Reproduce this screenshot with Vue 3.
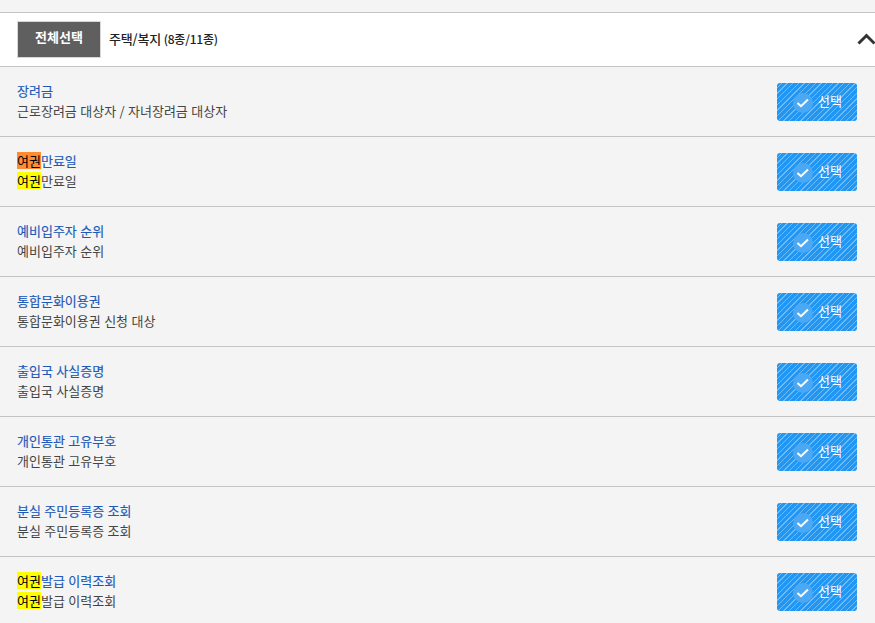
<script setup>
const items = [
  { title: [{ t: '장려금' }], desc: [{ t: '근로장려금 대상자 / 자녀장려금 대상자' }] },
  { title: [{ t: '여권', mark: 'orange' }, { t: '만료일' }], desc: [{ t: '여권', mark: 'yellow' }, { t: '만료일' }] },
  { title: [{ t: '예비입주자 순위' }], desc: [{ t: '예비입주자 순위' }] },
  { title: [{ t: '통합문화이용권' }], desc: [{ t: '통합문화이용권 신청 대상' }] },
  { title: [{ t: '출입국 사실증명' }], desc: [{ t: '출입국 사실증명' }] },
  { title: [{ t: '개인통관 고유부호' }], desc: [{ t: '개인통관 고유부호' }] },
  { title: [{ t: '분실 주민등록증 조회' }], desc: [{ t: '분실 주민등록증 조회' }] },
  { title: [{ t: '여권', mark: 'yellow' }, { t: '발급 이력조회' }], desc: [{ t: '여권', mark: 'yellow' }, { t: '발급 이력조회' }] },
]
</script>

<template>
  <div class="page">
    <div class="head">
      <button class="all">전체선택</button>
      <span class="cat">주택/복지 <em>(8종/11종)</em></span>
      <svg class="chev" width="20" height="12" viewBox="0 0 20 12">
        <path d="M1.5 10.5 L9.5 2.5 L17.5 10.5" fill="none" stroke="#333" stroke-width="3" />
      </svg>
    </div>
    <ul class="list">
      <li v-for="(it, i) in items" :key="i" class="row">
        <div class="info">
          <div class="title">
            <span v-for="(p, j) in it.title" :key="j" :class="p.mark">{{ p.t }}</span>
          </div>
          <div class="desc">
            <span v-for="(p, j) in it.desc" :key="j" :class="p.mark">{{ p.t }}</span>
          </div>
        </div>
        <button class="pick">
          <span class="tick">
            <svg width="12" height="10" viewBox="0 0 12 10">
              <path d="M0.5 5 L4 8.2 L11 1.5" fill="none" stroke="#fff" stroke-width="2" />
            </svg>
          </span>
          <span class="pick-label">선택</span>
        </button>
      </li>
    </ul>
  </div>
</template>

<style>
html, body {
  margin: 0;
  background: #f4f4f4;
  overflow: hidden;
}
</style>

<style scoped>
.page {
  padding-top: 12px;
  font-family: "Noto Sans CJK KR", "Noto Sans", sans-serif;
  font-size: 13px;
  color: #333;
}
.head {
  display: flex;
  align-items: center;
  height: 53px;
  padding-left: 17px;
  background: #fff;
  border-top: 1px solid #c4c4c4;
  border-bottom: 1px solid #c4c4c4;
}
.all {
  width: 84px;
  height: 37px;
  padding: 0 0 6px;
  background: #5f5f5f;
  border: 1px solid #d8d8d8;
  color: #fff;
  font: bold 13px "Noto Sans CJK KR", sans-serif;
}
.cat {
  margin-left: 8px;
  padding-bottom: 3px;
  color: #222;
  font-weight: 500;
  letter-spacing: -0.2px;
}
.cat em {
  font-style: normal;
  font-size: 12px;
}
.chev {
  margin-left: auto;
  margin-right: -2px;
  margin-bottom: 2px;
}
.list {
  list-style: none;
  margin: 0;
  padding: 0;
}
.row {
  display: flex;
  align-items: center;
  justify-content: space-between;
  height: 69px;
  padding: 0 18px 0 17px;
  border-bottom: 1px solid #c4c4c4;
}
.info {
  margin-top: -2px;
  word-spacing: 0.5px;
}
.title,
.desc {
  line-height: 20px;
  height: 20px;
}
.title {
  color: #2058b8;
  -webkit-text-stroke: 0.15px #2058b8;
}
.desc {
  color: #444;
}
.orange,
.yellow {
  display: inline-block;
  height: 17px;
  line-height: 17px;
  color: #000;
  -webkit-text-stroke: 0;
}
.orange {
  background: #ff8c33;
}
.yellow {
  background: #ff0;
}
.pick {
  display: flex;
  align-items: center;
  width: 80px;
  height: 38px;
  padding: 0 0 0 16px;
  border: 0;
  border-radius: 3px;
  background: repeating-linear-gradient(135deg, #2196f3 0 3px, #6dbcf8 3px 4px);
  color: #fff;
  font: 13px "Noto Sans CJK KR", sans-serif;
}
.tick {
  display: flex;
  align-items: center;
  justify-content: center;
  width: 20px;
  height: 20px;
  margin: 2px 5px 0 0;
  border-radius: 50%;
  background: #4ba8f5;
}
.pick-label {
  margin-top: -2px;
}
</style>
